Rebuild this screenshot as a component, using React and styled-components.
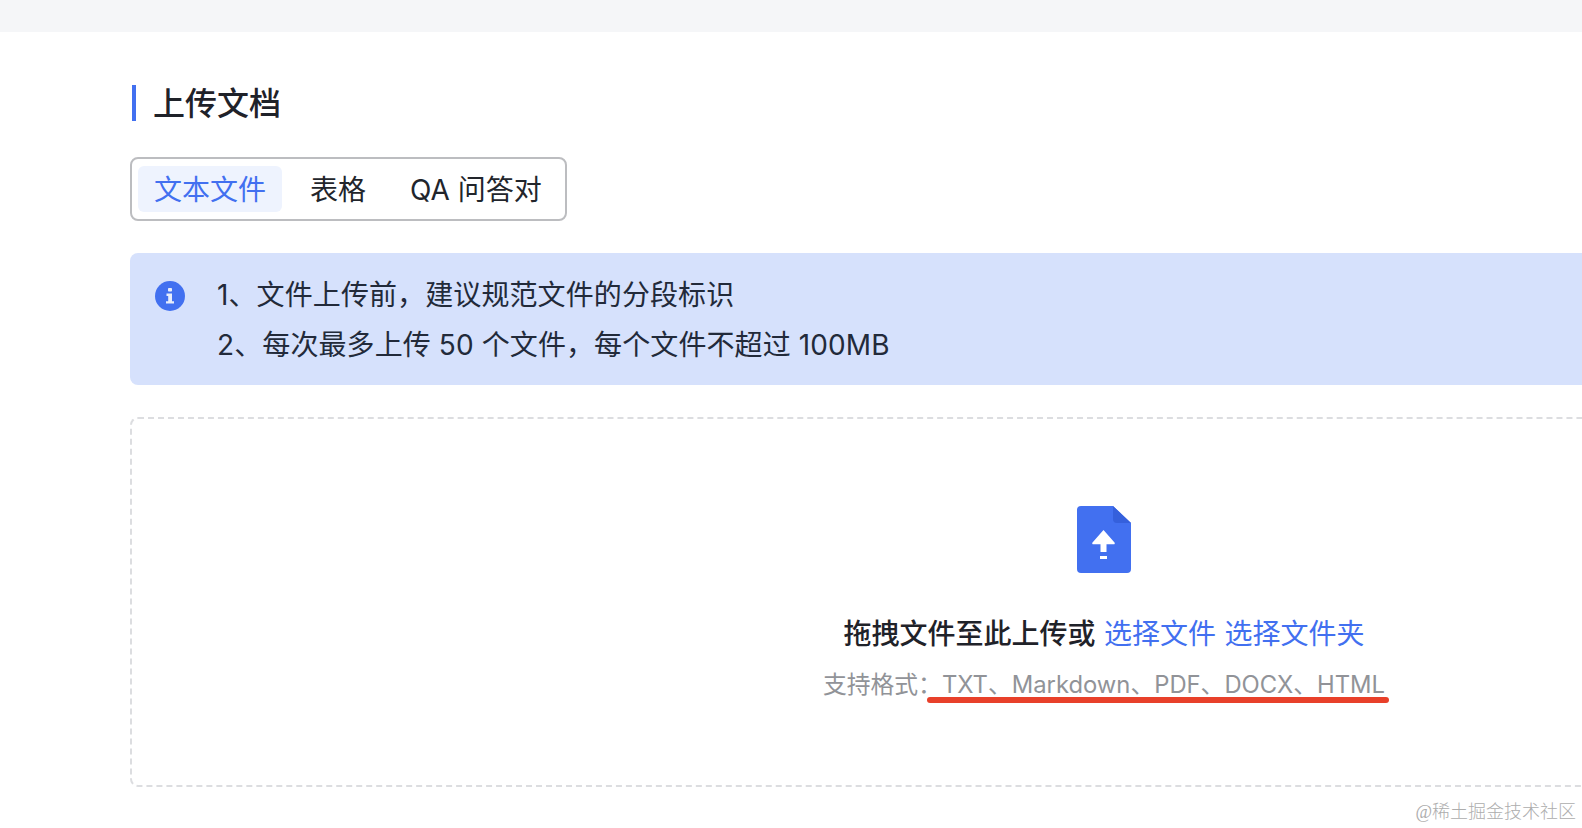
import React, { useState } from "react";
import styled, { createGlobalStyle } from "styled-components";

const TABS = ["文本文件", "表格", "QA 问答对"];

const GlobalStyle = createGlobalStyle`
  html, body {
    margin: 0;
    padding: 0;
    background: #fff;
    overflow: hidden;
  }
  body {
    font-family: Inter, "Noto Sans CJK SC", sans-serif;
  }
`;

const InfoIcon = () => (
  <svg width="30" height="30" viewBox="0 0 30 30">
    <circle cx="15" cy="15" r="15" fill="#4270f0" />
    <rect x="13" y="7" width="4" height="3.6" rx="0.8" fill="#e8edfb" />
    <path d="M11.5 12.6h5.5v7.6h2v2.3h-8v-2.3h2.2v-5.3h-1.7z" fill="#e8edfb" />
  </svg>
);

const FileUploadIcon = () => (
  <svg width="54" height="67" viewBox="0 0 54 67">
    <path
      d="M4 0h32l18 17v46a4 4 0 0 1-4 4H4a4 4 0 0 1-4-4V4a4 4 0 0 1 4-4z"
      fill="#4270f0"
    />
    <path d="M36 0l18 17H40a4 4 0 0 1-4-4z" fill="#3560dc" />
    <path
      d="M26.5 24l11 12.5a1 1 0 0 1-.8 1.7H29.5V46h-6v-7.8h-7.2a1 1 0 0 1-.8-1.7z"
      fill="#fff"
    />
    <rect x="23" y="50" width="7" height="3" fill="#fff" />
  </svg>
);

const App = () => {
  const [activeTab, setActiveTab] = useState(TABS[0]);

  return (
    <Page>
      <GlobalStyle />
      <TopBar />
      <Content>
        <Title>上传文档</Title>
        <TabGroup>
          {TABS.map((tab) => (
            <Tab key={tab} $active={tab === activeTab} onClick={() => setActiveTab(tab)}>
              {tab}
            </Tab>
          ))}
        </TabGroup>
        <Notice>
          <NoticeIcon>
            <InfoIcon />
          </NoticeIcon>
          <NoticeText>
            <p>1、文件上传前，建议规范文件的分段标识</p>
            <p>2、每次最多上传 50 个文件，每个文件不超过 100MB</p>
          </NoticeText>
        </Notice>
        <DropZone>
          <FileUploadIcon />
          <DropText>
            拖拽文件至此上传或 <DropLink>选择文件</DropLink> <DropLink>选择文件夹</DropLink>
          </DropText>
          <Formats>
            支持格式：TXT、Markdown、PDF、DOCX、HTML
            <Underline />
          </Formats>
        </DropZone>
      </Content>
      <Watermark>@稀土掘金技术社区</Watermark>
    </Page>
  );
};

export default App;
//
const Page = styled.div`
  position: relative;
  width: 1582px;
  height: 828px;
  overflow: hidden;
`;

const TopBar = styled.div`
  height: 32px;
  background: #f5f6f8;
`;

const Content = styled.main`
  display: flex;
  flex-direction: column;
  align-items: flex-start;
  width: 1948px;
  margin-left: 130px;
  padding-top: 53px;
`;

const Title = styled.h1`
  margin: 0 0 36px 2px;
  padding-left: 17px;
  border-left: 4px solid #4270f0;
  height: 36px;
  font-size: 32px;
  line-height: 38px;
  font-weight: 500;
  color: #1f2229;
`;

const TabGroup = styled.div`
  display: flex;
  gap: 12px;
  box-sizing: border-box;
  width: 437px;
  height: 64px;
  padding: 7px 6px;
  border: 2px solid #bcbdc0;
  border-radius: 8px;
`;

const Tab = styled.button`
  height: 46px;
  padding: 2px 16px 0;
  border: none;
  border-radius: 6px;
  background: ${(p) => (p.$active ? "#eef3fe" : "transparent")};
  color: ${(p) => (p.$active ? "#4270f0" : "#22252b")};
  font-family: inherit;
  font-size: 28px;
  line-height: 44px;
  white-space: nowrap;
  cursor: pointer;
`;

const Notice = styled.div`
  display: flex;
  box-sizing: border-box;
  width: 100%;
  height: 132px;
  margin-top: 32px;
  padding: 17px 25px;
  border-radius: 8px;
  background: #d6e1fc;
`;

const NoticeIcon = styled.div`
  flex: none;
  width: 30px;
  height: 30px;
  margin-top: 11px;
  margin-right: 32px;
`;

const NoticeText = styled.div`
  font-size: 28px;
  line-height: 50px;
  letter-spacing: 0.1px;
  color: #222a3a;

  p {
    margin: 0;
    white-space: nowrap;
  }
`;

const DropZone = styled.div`
  display: flex;
  flex-direction: column;
  align-items: center;
  box-sizing: border-box;
  width: 100%;
  height: 370px;
  margin-top: 32px;
  padding-top: 87px;
  border: 2px dashed #dcdde0;
  border-radius: 8px;
`;

const DropText = styled.div`
  margin-top: 39px;
  font-size: 28px;
  line-height: 44px;
  font-weight: 500;
  color: #1f2229;
  word-spacing: 1px;
  white-space: nowrap;
`;

const DropLink = styled.a`
  color: #4270f0;
  font-weight: 400;
  cursor: pointer;
`;

const Formats = styled.div`
  position: relative;
  margin-top: 9px;
  font-size: 23.8px;
  line-height: 40px;
  color: #919398;
  white-space: nowrap;
`;

const Underline = styled.span`
  position: absolute;
  right: -4px;
  bottom: 2px;
  width: 462px;
  height: 6px;
  border-radius: 3px;
  background: #e8402a;
`;

const Watermark = styled.div`
  position: absolute;
  right: 6px;
  bottom: 6px;
  font-family: "Liberation Serif", "Noto Sans CJK SC", serif;
  font-size: 18px;
  line-height: 20px;
  font-weight: 300;
  color: #adadad;
`;
